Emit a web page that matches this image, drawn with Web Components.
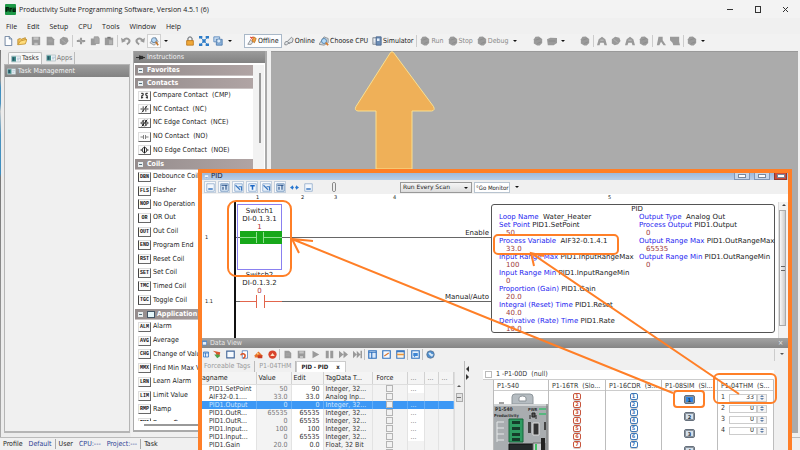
<!DOCTYPE html>
<html lang="en">
<head>
<meta charset="utf-8">
<title>Productivity Suite</title>
<style>
html,body{height:100%;margin:0}
body{font:7px/9px "DejaVu Sans Condensed","DejaVu Sans",sans-serif;color:#333;background:#f0f0f0;overflow:hidden}
</style>
</head>
<body>
<ps-app></ps-app>
<script>
const BASE = `*{box-sizing:border-box}
button,input,select{font:inherit;color:inherit;margin:0;padding:0;border:0;border-radius:0;background:none;appearance:none;-webkit-appearance:none;text-align:left;white-space:pre}
:host{display:block}`;

function define(name, css, html) {
  const t = document.createElement('template');
  const isFn = typeof html === 'function';
  if (!isFn) t.innerHTML = `<style>${BASE}${css}</style>${html}`;
  customElements.define(name, class extends HTMLElement {
    constructor() { super(); this.attachShadow({ mode: 'open' }); }
    connectedCallback() {
      if (this.shadowRoot.childNodes.length) return;
      if (isFn) this.shadowRoot.innerHTML = `<style>${BASE}${css}</style>${html(this)}`;
      else this.shadowRoot.append(t.content.cloneNode(true));
    }
  });
}

/* ---------- icons, drawn on a 12 x 12 grid ---------- */
const G = '#9a9a9a';
const ICONS = {
  logo: '<rect width="12" height="12" rx="1" fill="#1e9a48"/><path d="M0 3.500h12v5H0z" fill="#116a30"/><path d="M1.500 8.500V4h2v2.500h-2M5.500 8.500V5h2M9 5.500h2v2.500H9z" stroke="#021a0b" fill="none" stroke-width="1.200"/>',
  doc: '<path d="M2.500.5h5l3 3v8h-8z" fill="#fdfeff" stroke="#5b7394"/><path d="M7.500.5v3h3" fill="#d5e2f0" stroke="#5b7394"/>',
  open: '<path d="M1 10.500V4l3-1 1 1 5-2v3" fill="#f4c35a" stroke="#b98a2c"/><path d="M1 10.500L4 6l8-2-2 5.500z" fill="#ffdd7c" stroke="#c3922f"/>',
  save: `<path d="M1 1h10v10H1z" fill="${G}"/><path d="M3 1.500h6v3H3zM4 8h4v3H4z" fill="#c4c4c4"/>`,
  gdoc: `<path d="M2 1h6l3 3v7H2z" fill="${G}"/><path d="M4 5h5M4 7h5" stroke="#aaa"/>`,
  gblob: `<path d="M1 4l4-3 5 1 1.500 4-3 4-4 1-3.500-2z" fill="${G}"/><path d="M3 4l5 4" stroke="#b5b5b5"/>`,
  cut: `<path d="M1 6h10M6 2v8" stroke="${G}" stroke-width="2.500"/><path d="M3 4l6 4" stroke="#b0b0b0"/>`,
  copy: `<path d="M1 3h6v8H1z" fill="${G}"/><path d="M5 1h5l1 2v6H5z" fill="#a8a8a8" stroke="${G}"/>`,
  paste: `<path d="M1 2h10v9H1z" fill="${G}"/><path d="M4 1h4v2H4z" fill="#777"/><path d="M6 5h4v5H6z" fill="#b4b4b4"/>`,
  undo: `<path d="M3 5q4-4 7 0 1 3-3 5" fill="none" stroke="${G}" stroke-width="2.500"/><path d="M0 2l1 6 5-2z" fill="${G}"/>`,
  redo: `<path d="M9 5q-4-4-7 0-1 3 3 5" fill="none" stroke="${G}" stroke-width="2.500"/><path d="M12 2l-1 6-5-2z" fill="${G}"/>`,
  find: '<path d="M1 8l7-6 3 5-5 4z" fill="#d7dde3" stroke="#8b9096"/><circle cx="6" cy="5" r="3" fill="#b7d8f5" stroke="#5d7d9e"/><path d="M8 7l3 4" stroke="#c4762c" stroke-width="2"/>',
  lock: '<path d="M3.500 6V3q2.500-4 5 0v3" fill="none" stroke="#7b7f84" stroke-width="1.500"/><path d="M2 5.500h8V11H2z" fill="#f0a93a" stroke="#ba7518"/>',
  net: '<path d="M2 2l8 8M10 2L2 10" stroke="#4a8fce"/><path d="M0 0h4v3H0zM8 0h4v3H8zM0 9h4v3H0zM8 9h4v3H8zM4 4h4v4H4z" fill="#2d7cc8"/>',
  stack: '<path d="M1 1h7v6H1z" fill="#c7dcf1" stroke="#5686b9"/><path d="M4 4h7v7H4z" fill="#8db4dd" stroke="#4775a9"/><circle cx="7" cy="6" r="2.500" fill="#dcebfa" stroke="#6c94bd"/>',
  offline: '<path d="M1 10l3-5 3 2-2 3z" fill="#e2e5e8" stroke="#83888d"/><path d="M6 6l3 2 2-5-3-2z" fill="#f1a33f" stroke="#b97127"/><path d="M4 1l3 3M7 1L4 4" stroke="#e0472e" stroke-width="1.500"/>',
  online: '<path d="M1 10.500q-1-4 3-4l5-5 2 2-1 4-4 1-3 2z" fill="#e1e4e6" stroke="#777c82"/><path d="M4 7l3 2" stroke="#777c82"/>',
  choose: '<path d="M0 10l6-9 5 2v5l-5 3z" fill="#d3d8dd" stroke="#858b90"/><circle cx="6" cy="6" r="3" fill="#b5daf8" stroke="#477ba9"/><path d="M8 8l3 3" stroke="#d47a2c" stroke-width="2"/>',
  sim: '<path d="M1 2h7v8H1z" fill="#cbd2db" stroke="#80878f"/><path d="M5 1h6v10H5z" fill="#6c8db5" stroke="#44618a"/><path d="M6 3h3v3H6z" fill="#e4eefa"/><path d="M2 4h2M2 6h2" stroke="#fff"/>',
  gear: `<path d="M3 1l4-.500 4 3v5l-3 3H5L1 9V4z" fill="${G}"/><path d="M3 5l6-2M5 9l5-2" stroke="#8a8a8a"/>`,
  ghouse: `<path d="M0 11L2 4l4-3 4 3 2 7H9L8 8H4l-1 3z" fill="${G}"/><path d="M4 5h4" stroke="#c9c9c9"/>`,
  gwrench: `<path d="M1 11L3 1h5v4l4 6H9L6 7l-2 4z" fill="${G}"/>`,
  gflag: `<path d="M0 1h11v6l1 4H4L3 8 0 5z" fill="${G}"/>`,
  gbus: `<path d="M0 4l4-2 8 .500v6L8 11H1z" fill="${G}"/><path d="M2 6h8" stroke="#858585"/>`,
  task: '<path d="M.5 2.500h11v7H.5z" fill="#f4fafc" stroke="#aebdc3"/><path d="M1 3h5v6H1z" fill="#3f8d8a"/><path d="M2 4h2v4H2z" fill="#2b5364"/><path d="M7 5h4M7 7h3" stroke="#9fb3c8"/>',
  pin: '<path d="M0 6h5M5 3v6M5 4.500h4v3H5zM9 6h3" stroke="#222" fill="#333" stroke-width="1.200"/>',
  win: '<path d="M1 1h10v10H1z" fill="#eaf2fb" stroke="#3f7cc0" stroke-width="1.500"/><path d="M1 2.500h10" stroke="#3f7cc0" stroke-width="2"/>',
  page: '<path d="M1 1h10v10H1z" fill="#f4f8fd" stroke="#8aa7c8"/><path d="M3 8h6" stroke="#3b78c2" stroke-width="2"/>',
  rung: '<path d="M1 1h10v10H1z" fill="#e0ebf7" stroke="#5c86b4"/><path d="M2 3h8M8 3v6M4 5v4" stroke="#234e86" stroke-width="1.500"/>',
  rung2: '<path d="M1 1h10v10H1z" fill="#e8f0f9" stroke="#7fa2c9"/><path d="M2 3l6 6M6 5h4v5" stroke="#3a77c0" stroke-width="1.500" fill="none"/>',
  tee: '<path d="M1 1h10v10H1z" fill="#f2f7fd" stroke="#7fa2c9"/><path d="M3 3.500h6M6 3v6" stroke="#1d67c4" stroke-width="2"/>',
  arrows: '<path d="M0 6l4-3v2h1v2H4v2zM12 6L8 3v2H7v2h1v2z" fill="#2877d0"/>',
  flag: '<path d="M1 1l10 2-1 5-4-1-1-3z" fill="#d9572c"/><path d="M3 6l4 5 4-3-2-2z" fill="#4da04b"/>',
  frame: '<path d="M1 1.500h10v9H1z" fill="#f7fbff" stroke="#44689a" stroke-width="1.500"/>',
  reload: '<path d="M3 1h7v10H3z" fill="#fff" stroke="#4b77b5"/><path d="M1 7a3 3 0 1 1 3 4" fill="none" stroke="#d95327" stroke-width="2"/>',
  eject: '<path d="M1 10V7l5-5 5 5v3z" fill="#e8732d"/><path d="M5 7h6v4H5z" fill="#c93c23"/><path d="M4 5h2" stroke="#ffd37a" stroke-width="2"/>',
  stop: '<circle cx="6" cy="6" r="5.500" fill="#d8432b"/><path d="M3 8l3-4 3 4z" fill="#ffe3c4"/>',
  play: `<path d="M2 1l9 5-9 5z" fill="${G}"/>`,
  pause: `<path d="M1 1h4v10H1zM7 1h4v10H7z" fill="${G}"/>`,
  ff: `<path d="M0 1l6 5-6 5zM6 1l6 5-6 5z" fill="${G}"/>`,
  next: `<path d="M0 1l5 5-5 5zM5 1l5 5-5 5zM10 1h2v10h-2z" fill="${G}"/>`,
  cols: '<path d="M1 1h10v10H1z" fill="#dceafa" stroke="#2f70bd" stroke-width="1.500"/><path d="M1 3h10M5 3v8" stroke="#2f70bd" stroke-width="1.500"/>',
  chart: '<path d="M1 1h10v10H1z" fill="#f5f9ff" stroke="#2f70bd" stroke-width="1.500"/><path d="M3 8l3-2 3-2" stroke="#d9742e" stroke-width="1.500" fill="none"/>',
  chat: '<path d="M1 1h10v10H1z" fill="#e6f0fb" stroke="#2f70bd" stroke-width="1.500"/><path d="M3 4h6v4H6L4 10V8H3z" fill="#3f86d4"/>',
  rows: '<path d="M1 1h10v10H1z" fill="#fff4e2" stroke="#3b78c2" stroke-width="1.500"/><path d="M1 6h10" stroke="#e9973c" stroke-width="2"/><path d="M1 2h10" stroke="#3b78c2" stroke-width="2"/>',
  globe: '<circle cx="6" cy="6" r="5" fill="#4d8dcd" stroke="#60758c"/><path d="M3 4q3-2 4 1l3 1-2 3-3-2z" fill="#d5e7f7"/>',
  i_cmp: '<path d="M1 2h3v3H2v5M11 2H8v3h2v5M4 8H1M8 8h3" stroke="#222" fill="none" stroke-width="1.500"/>',
  i_nc: '<path d="M0 6h3M9 6h3M4 2v8M8 2v8M2 11l8-10" stroke="#222" fill="none" stroke-width="1.300"/>',
  i_nce: '<path d="M0 6h2M10 6h2M4 2v8M8 2v8M2 11l8-10" stroke="#111" fill="none" stroke-width="1.500"/><ellipse cx="6" cy="6" rx="4" ry="4.500" fill="none" stroke="#333"/>',
  i_no: '<path d="M0 6h4M8 6h4M4.500 3v6M7.500 3v6" stroke="#444" fill="none"/>',
  i_noe: '<path d="M0 6h3M9 6h3M6 1v10" stroke="#111" fill="none" stroke-width="1.500"/><ellipse cx="6" cy="6" rx="3.500" ry="4" fill="none" stroke="#222" stroke-width="1.200"/>'
};
define('ps-icon', `:host{display:block;flex:none;width:11px;height:11px}svg{display:block;width:100%;height:100%}`,
  el => `<svg viewBox="0 0 12 12" aria-hidden="true">${ICONS[el.getAttribute('name')]}</svg>`);

/* ---------- application chrome ---------- */
define('ps-titlebar', `:host{display:flex;align-items:center;height:18px;flex:none;padding:0 6px 0 5px;gap:3px;background:#f3f3f3;color:#222;font-family:"Open Sans","Noto Sans",sans-serif}
h1{font:inherit;margin:0;flex:1;white-space:pre}
button{width:28px;height:18px;display:grid;place-items:center}
svg{width:9px;height:9px;fill:none;stroke:#333}
nav{display:flex;margin-right:-5px}`,
`<ps-icon name="logo"></ps-icon><h1>Productivity Suite Programming Software, Version 4.5.1 (6)</h1>
<nav><button aria-label="Minimize"><svg><path d="M2 4.500h6"/></svg></button><button aria-label="Maximize"><svg><rect x="2.500" y="1.500" width="5" height="6"/></svg></button><button aria-label="Close"><svg><path d="M2 2l5 5M7 2l-5 5"/></svg></button></nav>`);

define('ps-menubar', `:host{display:flex;align-items:center;height:16px;flex:none;padding-left:6px;gap:10px;font-family:"Open Sans","Noto Sans",sans-serif;color:#222}`,
  ['File','Edit','Setup','CPU','Tools','Window','Help'].map(m => `<button>${m}</button>`).join(''));

const ib = n => `<button aria-label="${n}"><ps-icon name="${n}"></ps-icon></button>`;
define('ps-toolbar', `:host{display:flex;align-items:center;height:16px;flex:none;padding:0 0 2px 1px;background:#f2f2f2;color:#222}
div{display:flex;align-items:center;flex:none}
button{width:14px;height:14px;display:grid;place-items:center;flex:none}
ps-icon{width:10px;height:10px}
i{width:1px;height:12px;background:#ccc;margin:0 1px;flex:none}
.c{width:9px}.c::before{content:"";border:2px solid transparent;border-top-color:#111;margin-top:2px}
.t{width:auto;display:flex;align-items:center;gap:1px;padding:0 2px}
.on{background:#fcfdff;border:1px solid #a9b8c8}
.bx{background:#fafafa;border:1px solid #d0d0d0}
.off{color:#8a8a8a}
.b{margin-left:13px}.e{margin-left:11px}.f{margin-left:10px}`,
`<div>${ib('doc')}${ib('open')}${ib('save')}${ib('gdoc')}${ib('gblob')}<i></i>${ib('cut')}${ib('copy')}${ib('paste')}<i></i>${ib('undo')}${ib('redo')}<button class="bx" aria-label="find"><ps-icon name="find"></ps-icon></button><button class="c" aria-label="More"></button></div>
<div class="b">${ib('lock')}${ib('net')}${ib('stack')}<button class="c" aria-label="More"></button></div>
<div class="f"><button class="t on"><ps-icon name="offline"></ps-icon>Offline</button><button class="t"><ps-icon name="online"></ps-icon>Online</button><button class="t"><ps-icon name="choose"></ps-icon>Choose CPU</button><button class="t"><ps-icon name="sim"></ps-icon>Simulator</button><i></i>
<button class="t off"><ps-icon name="gear"></ps-icon>Run</button><button class="t off"><ps-icon name="gear"></ps-icon>Stop</button><button class="t off"><ps-icon name="gear"></ps-icon>Debug</button><button class="c" aria-label="More"></button></div>
<div class="e">${ib('gear')}${ib('gbus')}<button class="c" aria-label="More"></button></div>
<div class="f">${ib('gear')}<i></i>${ib('ghouse')}${ib('gblob')}${ib('ghouse')}${ib('gear')}<i></i>${ib('gwrench')}${ib('gflag')}<i></i>${ib('gear')}<button class="c" aria-label="More"></button></div>`);

define('ps-panel-head', `:host{display:flex;align-items:center;height:12px;flex:none;gap:1px;padding-left:2px;color:#f2f2f2;background:linear-gradient(#9c9c9c,#828282);white-space:pre}
ps-icon{width:9px;height:9px;margin-right:1px}`,
  el => `<ps-icon name="${el.getAttribute('icon')}"></ps-icon><slot></slot>`);

define('ps-tasks', `:host{display:flex;flex-direction:column;flex:none;width:130px;padding:2px 1px 4px 3px;background:#ececec}
nav{display:flex;padding-left:4px;height:12px;flex:none}
button{display:flex;align-items:center;gap:1px;padding:0 2px;color:#777;border-right:1px solid #bbb}
button.on{color:#333;background:#f8f8f8;border:1px solid #bcbcbc;border-bottom:0;border-radius:2px 2px 0 0;margin-right:2px}
section{flex:1;border:1px solid #b5b5b5;border-width:1px 1px 2px;background:#f0f0f0}
ps-icon{width:10px;height:10px}`,
`<nav><button class="on"><ps-icon name="task"></ps-icon>Tasks</button><button><ps-icon name="task"></ps-icon>Apps</button></nav>
<section><ps-panel-head icon="task">Task Management</ps-panel-head></section>`);

define('ps-section', `:host{margin-bottom:2px}
h2{margin:0;font:inherit;display:flex}
h2 button{display:flex;align-items:center;gap:4px;width:100%;height:11px;padding-left:3px;font-weight:bold;color:#fff;background:linear-gradient(90deg,#958d8d,#b0a4a4);border-bottom:1px solid #c9c2c2}
h2 button::before{content:"";width:5px;height:5px;flex:none;background:linear-gradient(#55707e,#55707e) 1px 2px/3px 1px no-repeat,#e8eef0}
h2 i{width:8px;height:7px;background:#e4f6fb;border:1px solid #456;margin-right:-2px}`,
  el => `<h2><button>${el.hasAttribute('boxed') ? '<i></i>' : ''}${el.getAttribute('label')}</button></h2><slot></slot>`);

define('ps-list', `:host{display:grid;grid-auto-rows:1fr;color:#222}
button{display:flex;align-items:center;gap:2px;padding-left:3px;min-height:0}
span{width:13px;height:10px;flex:none;display:grid;place-items:center;background:#fbfbfb;border:1px solid #ddd;border-right-color:#666;border-bottom-color:#666;font:bold 5px/8px "Liberation Mono",monospace;color:#111;white-space:nowrap}
.br span{border-left:1px solid #444}
ps-icon{width:9px;height:8px}`,
  el => el.getAttribute('items').split('|').map(s => { const [k, t] = s.split(':');
    return `<button class="${el.hasAttribute('coil') ? 'br' : ''}"><span>${ICONS[k] ? `<ps-icon name="${k}"></ps-icon>` : k}</span>${t}</button>`; }).join(''));

define('ps-instructions', `:host{display:flex;flex-direction:column;flex:none;width:134px;margin:1px 4px 5px 2px;background:#fff;border:1px solid #aaa;border-width:0 2px 2px 1px}
.body{display:flex;flex:1;min-height:0;padding:2px 1px 0}
.list{flex:1;overflow:hidden;margin-bottom:9px}
.sb{flex:none;width:11px;background:#f2f2f2;padding:8px 2px 0 6px}
.sb div{width:2px;height:70px;background:#999}
.hs{height:2px;flex:none;background:#999;margin:-6px 14px 4px 10px}
.l5{height:68px}.l10{height:137px}.l8{height:110px}`,
`<ps-panel-head icon="pin">Instructions</ps-panel-head>
<div class="body"><div class="list">
<ps-section label="Favorites"></ps-section>
<ps-section label="Contacts"><ps-list class="l5" items="i_cmp:Compare Contact  (CMP)|i_nc:NC Contact  (NC)|i_nce:NC Edge Contact  (NCE)|i_no:NO Contact  (NO)|i_noe:NO Edge Contact  (NOE)"></ps-list></ps-section>
<ps-section label="Coils"><ps-list coil class="l10" items="DBN:Debounce Coil|FLS:Flasher|NOP:No Operation|OR:OR Out|OUT:Out Coil|END:Program End|RST:Reset Coil|SET:Set Coil|TMC:Timed Coil|TGC:Toggle Coil"></ps-list></ps-section>
<ps-section boxed label="Application I"><ps-list class="l8" items="ALM:Alarm|AVG:Average|CHG:Change of Valu|MMX:Find Min Max V|LRN:Learn Alarm|LIM:Limit Value|RMP:Ramp|RMG:Ramp Gen"></ps-list></ps-section>
</div><div class="sb"><div></div></div></div><div class="hs"></div>`);

define('ps-statusbar', `:host{display:flex;align-items:center;height:13px;flex:none;padding-left:3px;background:#f0f0f0;border-top:1px solid #bbb;gap:6px;color:#222;white-space:pre}
b{font-weight:normal;color:#2d3f94}i{width:1px;height:10px;background:#aaa;margin:0 -3px}`,
`<span>Profile</span><b>Default</b><i></i><span>User</span><b>CPU:---</b><b>Project:---</b><i></i><span>Task</span>`);

/* ---------- ladder editor ---------- */
define('pid-block', `:host{border:1px solid #555;border-radius:3px;background:#fff;font:7px/8px "DejaVu Sans",sans-serif;color:#222;padding:0 6px 0 7px;white-space:pre}
h3{font:inherit;margin:0;padding-left:7px;text-align:center}
div{display:grid;grid-template-columns:140px 1fr}
dfn{font-style:normal;color:#2424f0}
p{margin:0}.v{color:#a03a3a;padding-left:7px}`,
  () => {
    const r = ([l, t, v]) => `<p><dfn>${l}</dfn> ${t}</p>${v ? `<p class="v">${v}</p>` : ''}`;
    return `<h3>PID</h3><div><section>${[['Loop Name',' Water_Heater'],['Set Point','PID1.SetPoint','50'],['Process Variable',' AIF32-0.1.4.1','33.0'],['Input Range Max','PID1.InputRangeMax','100'],['Input Range Min','PID1.InputRangeMin','0'],['Proportion (Gain)','PID1.Gain','20.0'],['Integral (Reset) Time','PID1.Reset','40.0'],['Derivative (Rate) Time','PID1.Rate','10.0']].map(r).join('')}</section><section>${[['Output Type',' Analog Out'],['Process Output','PID1.Output','0'],['Output Range Max','PID1.OutRangeMax','65535'],['Output Range Min','PID1.OutRangeMin','0']].map(r).join('')}</section></div>`;
  });

/* Free canvas: rungs, contacts and the function block are placed as diagram nodes. */
define('ladder-view', `:host{position:relative;flex:none;height:144px;background:#fff;font:7px/8px "DejaVu Sans",sans-serif;color:#222;overflow:hidden}
.n{position:absolute;white-space:pre}
.r{font-size:5px;line-height:6px;top:0}
.rail{left:32px;top:7px;bottom:0;width:2px;background:#111}
.w{height:1px;background:#666;left:34px;right:297px}
.sel{left:35px;top:10px;width:45px;height:66px;border:1px solid #8a80f0}
.lab{left:34px;width:47px;text-align:center}
.lab b{display:block;font-weight:normal;color:#b03030}
.grn{left:38px;top:37px;width:42px;height:13px}
.red{left:38px;top:101px;width:42px;height:13px}
.io{right:299px}
pid-block{position:absolute;right:13px;top:10px;width:284px;height:129px}
.sb{right:0;top:8px;bottom:0;width:10px;background:#f3f3f3;border-left:1px solid #ddd}
.sb::before{content:"";display:block;width:0;border:2px solid transparent;border-bottom-color:#444;margin:0 auto 4px}
.sb div{height:116px;margin-right:2px;background:linear-gradient(90deg,#f8f8f8,#ccc);border:1px solid #aaa;display:grid;place-items:center}
.sb div::before{content:"";width:4px;height:3px;border:solid #666;border-width:1px 0}`,
`<span class="n r" style="left:54px">1</span><span class="n r" style="left:99px">2</span><span class="n r" style="left:132px">3</span><span class="n r" style="left:191px">4</span><span class="n r" style="left:406px">5</span>
<span class="n r" style="left:3px;top:40px">1</span><span class="n r" style="left:3px;top:104px">1.1</span>
<div class="n rail"></div><div class="n w" style="top:43px"></div><div class="n w" style="top:107px"></div>
<div class="n sel"></div>
<div class="n lab" style="top:13px">Switch1
DI-0.1.3.1<b>1</b></div>
<svg class="n grn"><path d="M0 0h42v13H0z" fill="#17a81a"/><path d="M0 6.500h16M24 6.500h18M16.500 1v11M23.500 1v11" stroke="#8fe08f"/></svg>
<div class="n lab" style="top:77px">Switch2
DI-0.1.3.2<b>0</b></div>
<svg class="n red"><path d="M16 0h8v13h-8z" fill="#fff"/><path d="M0 6.500h16M24 6.500h18M16.500 0v13M24.500 0v13" stroke="#e2654c"/></svg>
<span class="n io" style="top:35px">Enable</span><span class="n io" style="top:99px">Manual/Auto</span>
<pid-block></pid-block><div class="n sb"><div></div></div>`);

define('ladder-toolbar', `:host{display:flex;align-items:center;height:14px;flex:none;background:#f0f0f0;padding-left:2px;font:6px/8px "DejaVu Sans",sans-serif;color:#222}
button{width:12px;height:12px;margin-right:2px;flex:none;display:grid;place-items:center;border:1px solid #c3cfdd;background:#f8fafd}
button.p{border:0;background:none}
ps-icon{width:9px;height:9px}
input{width:4px;height:10px;border:1px solid #888;border-radius:2px;background:#eee;margin:0 64px 0 16px;overflow:hidden}
input::-webkit-slider-thumb{appearance:none;width:2px;height:8px;background:#eee}
label{position:relative;display:block}
select{width:72px;height:11px;border:1px solid #999;background:linear-gradient(#f5f5f5,#dcdcdc);padding-left:2px}
label::after{content:"";position:absolute;right:4px;top:5px;border:2px solid transparent;border-top-color:#111;pointer-events:none}
button.m{width:auto;height:11px;border:1px solid #b8c4d0;background:#fff;margin:0 5px 0 2px;padding:0 1px;display:block;line-height:9px;font-family:"DejaVu Sans Condensed","DejaVu Sans",sans-serif}
.c{width:4px;border:2px solid transparent;border-top-color:#111;margin-top:2px}`,
`${['page','rung','rung2','tee','rung2','rung'].map(ib).join('')}<button class="p" aria-label="Spread"><ps-icon name="arrows"></ps-icon></button><button class="p" aria-label="Page"><ps-icon name="page"></ps-icon></button>
<input type="range" aria-label="Zoom"><label><select aria-label="Run mode"><option>Run Every Scan</option></select></label><button class="m">°Go Monitor</button><i class="c"></i>`);

/* ---------- data view ---------- */
define('tag-table', `:host{display:flex;flex:1;min-height:0;background:#fff;overflow:hidden;color:#333}
table{border-collapse:collapse;table-layout:fixed;width:251px;height:0;flex:none}
th,td{padding:0;overflow:hidden;white-space:pre;font-weight:normal;line-height:8px;height:8px;text-align:left;border-right:1px solid #e3e3e3}
th{height:12px;background:#f4f4f4;border-right-color:#d2d2d2;color:#222;border-bottom:1px solid #ddd;padding-left:2px}
th:first-child{padding-left:0}
td:nth-child(1){padding-left:7px}
td:nth-child(2),td:nth-child(3){text-align:right;padding-right:3px}
td:nth-child(2),td:nth-child(4),td:nth-child(5),td:nth-child(7),td:nth-child(8),.g{background:#f3f3f3}
td:nth-child(2){color:#777}
td:nth-child(4){padding-left:2px}td:nth-child(5){text-align:center}
td:nth-child(6),th:nth-child(n+6){color:#777;padding-left:3px}
input{display:block;width:7px;height:7px;border:1px solid #b4b4b4;background:#f2f2f2;margin:0 auto}
.s td{background:#3d98f5;color:#cfe6ff;border-right-color:#62adf8}
.sb{width:10px;background:#f0f0f0;border-left:1px solid #ddd;padding:11px 1px 0;flex:none}
.sb::before{content:"";display:block;width:0;border:2px solid transparent;border-bottom-color:#555;margin:0 auto 6px}
.sb div{height:9px;border:1px solid #aaa;background:#e2e2e2;display:grid;place-items:center}
.sb div::before{content:"";width:4px;height:1px;background:#777}`,
  () => {
    const rows = [['PID1.SetPoint','50','90','Integer, 32...',1],['AIF32-0.1....','33.0','33.0','Analog Inp...',0],['PID1.Output','0','0','Integer, 32...',1],['PID1.OutR...','65535','65535','Integer, 32...',1],['PID1.OutR...','0','65535','Integer, 32...',1],['PID1.Input...','100','100','Integer, 32...',1],['PID1.Input...','0','65535','Integer, 32...',1],['PID1.Gain','20.0','0.0','Float, 32 Bit',0],['PID1.Reset','40.0','0.0','Float, 32 Bit',0]];
    return `<table><colgroup>${[54,35,32,49,35,17,14,15].map(w => `<col style="width:${w}px">`).join('')}</colgroup>
<thead><tr><th>agname</th><th>Value</th><th>Edit</th><th>TagData T...</th><th style="padding-left:4px">Force</th><th>...</th><th>...</th><th>...</th></tr></thead>
<tbody>${rows.map((r, i) => `<tr class="${i === 2 ? 's' : ''}"><td>${r[0]}</td><td>${r[1]}</td><td>${r[2]}</td><td>${r[3]}</td><td><input type="checkbox" aria-label="Force ${r[0]}"></td><td class="${r[4] ? '' : 'g'}">${r[4] ? '...' : ''}</td><td></td><td></td></tr>`).join('')}</tbody></table><div class="sb"><div></div></div>`;
  });

define('plc-module', `:host{display:block;min-width:0;border-right:1px solid #bdbdbd;overflow:hidden}
h4{margin:0;font:inherit;height:11px;padding:2px 0 0 3px;line-height:8px;white-space:pre;border-bottom:1px solid #ccc;overflow:hidden}`,
  el => `<h4>${el.getAttribute('label')}</h4><slot></slot>`);

define('plc-points', `:host{display:flex;flex-direction:column;align-items:center;padding-top:2px;gap:1px;--c:#c8553d}
:host([kind=in]){--c:#3e78b8}
:host([kind=sim]){--c:#66707c;padding-top:4px;gap:8px}
button{width:8px;height:7px;flex:none;border:1px solid var(--c);border-radius:2px;background:#fff;text-align:center;font:bold 5px/5px "DejaVu Sans",sans-serif;color:var(--c);box-shadow:0 1px 0 #8886}
:host([kind=sim]) button{width:11px;height:9px;line-height:6px;border-width:1px;background:#d4e0ec;color:#234;box-shadow:inset 0 0 0 1px #8a939c}
:host([kind=sim]) button:first-of-type{background:#2f86e6}`,
  el => Array.from({ length: +el.getAttribute('count') }, (_, i) => `<button>${i + 1}</button>`).join(''));

define('analog-inputs', `:host{display:grid;gap:2px;padding:2px 6px 0 3px}
label{display:grid;grid-template-columns:8px 1fr 10px;align-items:center;height:9px}
input{width:100%;height:8px;border:1px solid #ccc;background:#fff;text-align:right;padding-right:2px}
i{height:8px;border:1px solid #ccc;background:#f3f3f3;display:flex;flex-direction:column;align-items:center;justify-content:center;gap:1px}
i::before,i::after{content:"";border:2px solid transparent;border-top:0;border-bottom-color:#6180aa}
i::after{border:2px solid transparent;border-bottom:0;border-top-color:#6180aa}`,
  [33, 0, 0, 0].map((v, i) => `<label>${i + 1}<input type="text" value="${v}"><i></i></label>`).join(''));

define('plc-cpu', `svg{display:block;width:55px;height:60px}text{font:bold 5px "DejaVu Sans Condensed","DejaVu Sans",sans-serif}`,
`<svg viewBox="0 0 55 60"><path d="M18 13V6q0-3 3-3h15q3 0 3 3v7z" fill="#b5bcc1" stroke="#8e969b"/><path d="M25 10V7q0-2 3.500-2T32 7v3z" fill="#fff" stroke="#8a9196"/>
<path d="M5 12h5" stroke="#444"/><path d="M0 13h54v47H0z" fill="#a9adb0"/><path d="M0 13h54v2H0z" fill="#d0d3d4"/><path d="M53 13v47" stroke="#777"/>
<text x="1" y="20" fill="#333">P1-540</text><text x="0" y="26" fill="#333" style="font-size:4px">Productivity</text>
<text x="34" y="20" fill="#333" style="font-size:4px">PWR</text><path d="M45 18h7M45 23h7" stroke="#58b77f" stroke-width="2"/><path d="M38 22h3v4h-3zM36 24v4M42 24v4" stroke="#222" fill="#555"/>
<path d="M3 31h7M3 37h7M3 43h7M3 49h7M3 31v20" stroke="#e5e8e9" fill="none"/>
<path d="M15 28h14v23H15z" fill="#2f9c62" stroke="#17643b"/><path d="M18 30h8v3h-8zM18 36h8v3h-8zM18 42h8v3h-8zM18 47h8v3h-8z" fill="#153d2a"/>
<path d="M34 31h3v11h-3zM50 31h2v8h-2z" fill="#444"/><path d="M39 32h6v12h-6z" fill="#333" stroke="#ddd"/><path d="M15 53h24v7H15z" fill="#25292b" stroke="#111"/><path d="M39 52h12v8H39z" fill="#ccd0d2" stroke="#666"/><path d="M47 47h4v13h-4z" fill="#222"/><path d="M42 53v6" stroke="#3fbf62" stroke-width="2"/></svg>`);

define('module-rack', `:host{display:flex;flex-direction:column;flex:1;min-width:0;background:#f0f0f0;padding:9px 14px 0 12px;overflow:hidden}
.t{background:#fff;border-bottom:1px solid #ccc;height:10px;display:flex;align-items:center;gap:4px;white-space:pre;padding-left:2px;flex:none}
.t::before{content:"";width:5px;height:5px;border:1px solid #bbb}
.g{display:grid;grid-template-columns:55px 57px 56px 56px 1fr;flex:1;background:#fff;margin-left:10px;border-left:1px solid #bbb}
`,
`<div class="t">1 -P1-00D  (null)</div><div class="g">
<plc-module label="P1-540"><plc-cpu></plc-cpu></plc-module>
<plc-module label="P1-16TR  (Slo..."><plc-points count="7"></plc-points></plc-module>
<plc-module label="P1-16CDR  (S..."><plc-points kind="in" count="7"></plc-points></plc-module>
<plc-module label="P1-08SIM  (Sl..."><plc-points kind="sim" count="4"></plc-points></plc-module>
<plc-module label="P1-04THM  (S..."><analog-inputs></analog-inputs></plc-module></div>`);

define('data-view', `:host{display:flex;flex-direction:column;flex:1;min-height:0;background:#f0f0f0}
header{display:flex;align-items:center;height:10px;background:linear-gradient(#a3a3a3,#858585);color:#e9e9e9;padding:0 4px 0 0;gap:3px;flex:none}
header span{flex:1}header ps-icon{width:5px;height:8px}header button{width:6px}
.tb{display:flex;align-items:center;height:13px;flex:none}
.tb button{width:14px;height:12px;display:grid;place-items:center;flex:none}
.tb button:first-child{width:7px}
.tb i{width:1px;height:11px;background:#c0c0c0;margin:0;flex:none}
.tb ps-icon{width:9px;height:9px}
.tb button:first-child ps-icon{width:6px}
.tb .c{margin-left:auto;width:14px;border-left:1px solid #ccc}.c::before{content:"";border:2px solid transparent;border-top-color:#555}
.m{display:flex;flex:1;min-height:0}
.l{width:262px;flex:none;display:flex;flex-direction:column}
nav{display:flex;height:11px;flex:none;color:#999}
nav button{padding:0 4px 0 2px;border-right:1px solid #bbb}
nav button+button{padding:0 4px}
nav .on{background:#fff;border:1px solid #ccc;border-bottom:0;color:#222;font-weight:bold;padding:0 5px 0 4px;display:flex;gap:8px;font-size:6px}
.sp{width:7px;flex:none;border-left:1px solid #bbb;padding:5px 1px 0}
.sp::before,.sp::after{content:"";display:block;width:0;border:3px solid transparent;border-right-color:#333;border-left:0;margin-bottom:2px}
.sp::after{border:3px solid transparent;border-left-color:#333;border-right:0}`,
`<header><ps-icon name="win"></ps-icon><span>Data View</span><button aria-label="Close">×</button></header>
<div class="tb">${['cols','flag','frame','reload','eject','stop'].map(ib).join('')}<i></i>${['gdoc','save','play','pause','ff','next'].map(ib).join('')}<i></i>${['cols','chart','rows'].map(ib).join('')}<i></i>${ib('chat')}<i></i>${ib('globe')}<button class="c" aria-label="More"></button></div>
<div class="m"><div class="l"><nav><button>Forceable Tags</button><button>P1-04THM</button><button class="on"><span>PID - PID</span><span>x</span></button></nav><tag-table></tag-table></div><div class="sp"></div><module-rack></module-rack></div>`);

define('pid-window', `:host{display:flex;flex-direction:column;position:absolute;left:198px;right:8px;top:169px;bottom:0;border:solid #ff7f27;border-width:4px 4px 0;background:#f0f0f0;overflow:hidden}
header{display:flex;align-items:center;height:7px;flex:none;padding-left:2px;gap:2px;background:linear-gradient(#9fb9dc,#b9cfe9);color:#223;font:7px/7px "DejaVu Sans",sans-serif}
header span{flex:1}header ps-icon{width:5px;height:6px}
header button{width:16px;height:7px;border:1px solid #8096b5;border-top:0;background:#c5d6ea;margin-right:2px;display:grid;place-items:center}
header button::before{content:"";width:6px;height:2px;border:1px solid #78879c;background:#fff}
header button:last-child{background:#cc4c3a;border-color:#8c3a30;margin-right:1px;width:13px}`,
`<header><ps-icon name="page"></ps-icon><span>PID</span><button aria-label="Minimize"></button><button aria-label="Restore"></button><button aria-label="Close"></button></header><ladder-toolbar></ladder-toolbar><ladder-view></ladder-view><data-view></data-view>`);

/* Callouts that lie over the whole application */
define('ps-callouts', `:host{position:absolute;left:0;top:0;pointer-events:none}svg{display:block}`,
`<svg width="800" height="450" fill="none" stroke="#ff7f27" stroke-width="2">
<path d="M390.500 52.500q1.500-1.500 3 0l40 54q2 4-2 4.500H412v58h-36v-58h-18q-4-.500-2-4.500z" fill="#efb058" stroke="#fbe08f" stroke-width="1"/>
<path d="M375 171h38" stroke-width="4"/>
<rect x="228" y="201" width="63" height="75" rx="8"/><rect x="494" y="235" width="124" height="19" rx="4"/>
<rect x="674" y="391" width="30" height="16" rx="3"/><rect x="714" y="374" width="62" height="29" rx="5"/>
<path d="M673 393L292 239M313 241l-21-2 7 14M739 394L531 253M544 256l-13-3 3 13"/></svg>`);

define('ps-app', `:host{display:flex;flex-direction:column;position:relative;height:100vh;overflow:hidden;background:#f0f0f0}
main{display:flex;flex:1;min-height:0;border-left:1px solid;border-image:linear-gradient(#777,#999 8%,#3c8dc0 10%,#4b93bf 14%,#ccc 16%,#4b93bf 22%,#3c8dc0 32%,#777 33%,#aaa) 1}
.ws{flex:1;background:#ababab;margin:1px 2px 4px 0;border-top:1px solid #999}`,
`<ps-titlebar></ps-titlebar><ps-menubar></ps-menubar><ps-toolbar></ps-toolbar>
<main><ps-tasks></ps-tasks><ps-instructions></ps-instructions><div class="ws"></div></main><ps-statusbar></ps-statusbar>
<pid-window></pid-window><ps-callouts></ps-callouts>`);
</script>
</body>
</html>
